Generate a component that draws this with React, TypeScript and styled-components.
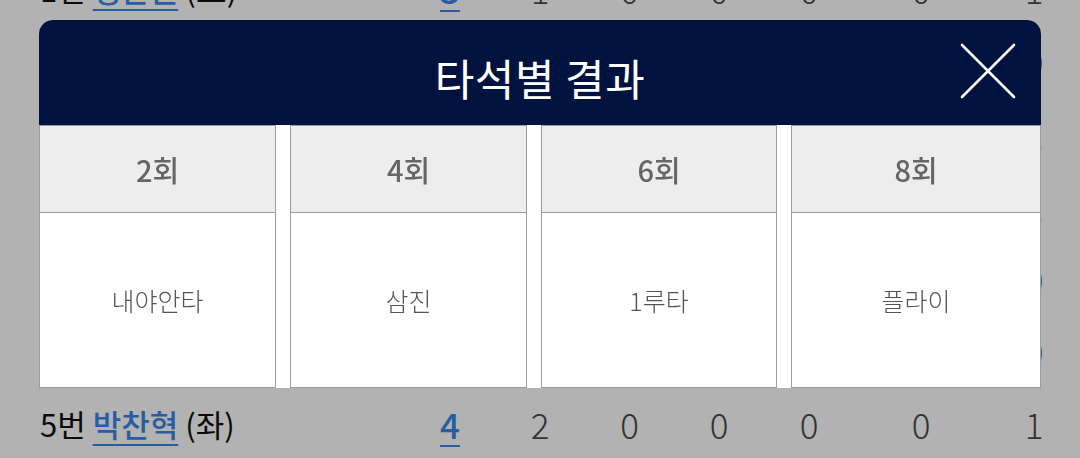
import React from 'react';
import styled, { createGlobalStyle } from 'styled-components';

const GlobalStyle = createGlobalStyle`
  html, body {
    margin: 0;
    padding: 0;
    background: #ffffff;
    overflow: hidden;
  }
  body {
    font-family: "Noto Sans CJK KR", "Noto Sans", sans-serif;
  }
`;

// Lineup table behind the dialog
const Lineup = styled.div`
  margin-top: -48px;
  padding-left: 40px;
`;

const LineupRow = styled.div`
  display: grid;
  grid-template-columns: 365px 90px 90px 89px 90px 90px 134px 92px;
  align-items: center;
  height: 72.5px;
`;

const Batter = styled.div`
  font-size: 31px;
  color: #111;
  white-space: nowrap;
`;

const PlayerLink = styled.span`
  color: #3b86ea;
  font-weight: 500;
  text-decoration: underline;
  text-decoration-thickness: 1.5px;
  text-underline-offset: 7px;
`;

const Stat = styled.div<{ $link?: boolean }>`
  text-align: center;
  font-size: 35px;
  font-weight: ${(p) => (p.$link ? 500 : 300)};
  color: ${(p) => (p.$link ? '#3b86ea' : '#4a4a4a')};
  text-decoration: ${(p) => (p.$link ? 'underline' : 'none')};
  text-decoration-thickness: 1.5px;
  text-underline-offset: 6px;
`;

const Overlay = styled.div`
  position: fixed;
  inset: 0;
  background: rgba(0, 0, 0, 0.3);
`;

// Dialog
const Dialog = styled.div`
  position: fixed;
  left: 39px;
  top: 20px;
  width: 1002px;
  background: #ffffff;
  border-radius: 14px 14px 0 0;
  overflow: hidden;
`;

const DialogHeader = styled.div`
  position: relative;
  height: 105px;
  background: #00133f;
  display: flex;
  align-items: center;
  justify-content: center;
`;

const DialogTitle = styled.h2`
  margin: 8px 0 0;
  font-size: 43px;
  font-weight: 400;
  color: #ffffff;
  letter-spacing: 0.5px;
`;

const CloseButton = styled.button`
  position: absolute;
  right: 24px;
  top: 22px;
  width: 58px;
  height: 58px;
  padding: 0;
  border: none;
  background: none;
  cursor: pointer;
  display: flex;
  align-items: center;
  justify-content: center;
`;

const Innings = styled.div`
  display: grid;
  grid-template-columns: 237px 237px 236px 1fr;
  column-gap: 14px;
`;

const Inning = styled.div`
  display: flex;
  flex-direction: column;
  border: 1px solid #9c9c9c;
`;

const InningHead = styled.div`
  height: 86px;
  display: flex;
  align-items: center;
  justify-content: center;
  background: #ededed;
  border-bottom: 1px solid #9c9c9c;
  font-size: 29px;
  font-weight: 500;
  color: #666;
`;

const InningResult = styled.div`
  height: 174px;
  display: flex;
  align-items: center;
  justify-content: center;
  font-size: 25px;
  font-weight: 300;
  color: #555;
`;

const lineup = [
  { order: '1번', name: '정은원', pos: '(二)', stats: ['3', '1', '0', '0', '0', '0', '1'] },
  { order: '2번', name: '최인호', pos: '(좌)', stats: ['4', '1', '0', '0', '0', '1', '0'] },
  { order: '3번', name: '노시환', pos: '(三)', stats: ['4', '1', '0', '0', '0', '0', '1'] },
  { order: '4번', name: '채은성', pos: '(一)', stats: ['4', '2', '1', '0', '0', '0', '1'] },
  { order: '4번', name: '김태연', pos: '(우)', stats: ['3', '0', '0', '0', '0', '1', '0'] },
  { order: '5번', name: '이진영', pos: '(중)', stats: ['3', '1', '0', '0', '0', '0', '0'] },
  { order: '5번', name: '박찬혁', pos: '(좌)', stats: ['4', '2', '0', '0', '0', '0', '1'] },
];

const results = [
  { inning: '2회', result: '내야안타' },
  { inning: '4회', result: '삼진' },
  { inning: '6회', result: '1루타' },
  { inning: '8회', result: '플라이' },
];

const CloseIcon = () => (
  <svg width="56" height="56" viewBox="0 0 56 56" fill="none">
    <path d="M2 2 L54 54 M54 2 L2 54" stroke="#ffffff" strokeWidth="2.6" strokeLinecap="round" />
  </svg>
);

export default function App() {
  return (
    <>
      <GlobalStyle />
      <Lineup>
        {lineup.map((row, i) => (
          <LineupRow key={i}>
            <Batter>
              {row.order} <PlayerLink>{row.name}</PlayerLink> {row.pos}
            </Batter>
            {row.stats.map((s, j) => (
              <Stat key={j} $link={j === 0}>
                {s}
              </Stat>
            ))}
          </LineupRow>
        ))}
      </Lineup>
      <Overlay />
      <Dialog>
        <DialogHeader>
          <DialogTitle>타석별 결과</DialogTitle>
          <CloseButton aria-label="닫기">
            <CloseIcon />
          </CloseButton>
        </DialogHeader>
        <Innings>
          {results.map((r) => (
            <Inning key={r.inning}>
              <InningHead>{r.inning}</InningHead>
              <InningResult>{r.result}</InningResult>
            </Inning>
          ))}
        </Innings>
      </Dialog>
    </>
  );
}
